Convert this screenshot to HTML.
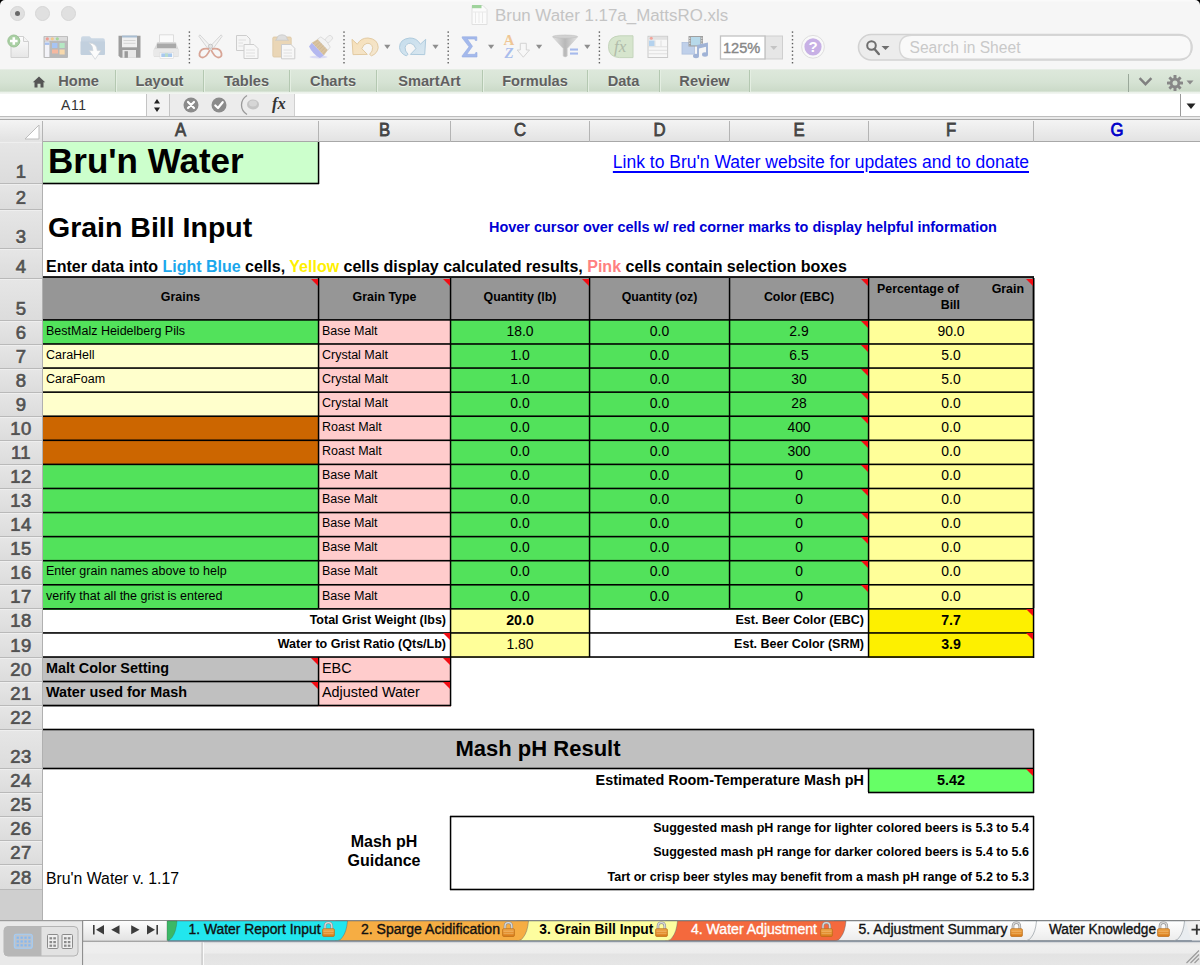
<!DOCTYPE html>
<html><head><meta charset="utf-8"><title>Brun Water</title>
<style>
html,body{margin:0;padding:0;}
body{width:1200px;height:965px;overflow:hidden;position:relative;background:#fff;font-family:"Liberation Sans",sans-serif;}
div{position:absolute;}
.c{white-space:nowrap;overflow:visible;}
.c div{position:absolute;}
.l{}
.t{width:0;height:0;border-left:7px solid transparent;border-top:7px solid #f20d14;}
#titlebar{left:0;top:0;width:1200px;height:69px;background:linear-gradient(#fbfbfb,#f6f6f6 2.5px);border-radius:5px 5px 0 0}
.tl{width:15px;height:15px;border-radius:50%;background:#e0e0e0;border:1px solid #d6d6d6;box-sizing:border-box;top:6px;}
#title{left:495px;top:4.5px;font-size:16.9px;color:#c4c4c4;line-height:22px;white-space:nowrap;}
#ribbon{left:0;top:69px;width:1200px;height:25px;background:linear-gradient(#dde8db,#d6e3d4 50%,#cbdac8 88%,#e9f0e8 92%,#f4f7f3);border-top:1px solid #e6ede5;box-sizing:border-box}
.rt{top:0;height:22px;line-height:23px;font-size:14.6px;font-weight:bold;color:#606060;text-align:center;border-right:1px solid #b4c8b1;box-shadow:1px 0 0 #e4eee2;text-shadow:0 1px 0 rgba(255,255,255,.6)}
#fbar{left:0;top:94px;width:1200px;height:22px;background:#fff;}
#fsep{left:0;top:116px;width:1200px;height:4px;background:#e9e9e9;border-top:1px solid #bdbdbd;border-bottom:1px solid #a9a9a9;box-sizing:border-box}
#colhdr{left:0;top:120px;width:1200px;height:21px;background:linear-gradient(#f4f4f4,#e3e3e3);border-bottom:1px solid #a8a8a8;box-sizing:content-box;height:21px}
.ch{top:120px;height:21px;line-height:21px;text-align:center;font-size:18px;transform:scaleX(.93);color:#4a4a4a;-webkit-text-stroke:0.8px;text-shadow:0 1px 0 #fff}
.chl{top:121px;width:1px;height:21px;background:#b4b4b4}
#rowhdr{left:0;top:141px;width:42px;height:779px;background:#e4e4e4;border-right:1px solid #b4b4b4;box-sizing:content-box;width:42px}
.rh{left:0;width:42px;background:linear-gradient(#e6e6e6,#dcdcdc);box-shadow:inset 0 1px 0 #efefef}
.rh span{position:absolute;left:0;width:42px;text-align:center;bottom:0px;font-size:18.5px;color:#525252;line-height:22px;-webkit-text-stroke:0.7px;text-shadow:0 1px 0 #fff;letter-spacing:0.4px}
.rhl{left:0;width:42px;height:1px;background:#b9b9b9}
#bottom{left:0;top:920px;width:1200px;height:45px;background:#ececec;}
</style></head><body>
<!-- sheet -->
<div id="sheet" style="left:0;top:0;width:1200px;height:920px;overflow:hidden">
<div style="left:42px;top:142px;width:277px;height:42px;background:#ccffcc"></div>
<div class="c" style="left:43px;top:142px;width:275px;height:41px;text-align:left;font-size:35px;color:#000;font-weight:bold;line-height:37px;padding:0 5px;box-sizing:border-box;">Bru'n Water</div>
<div class="c" style="left:590px;top:142px;width:443px;height:41px;text-align:right;font-size:17.5px;color:#0000ff;line-height:41px;padding:0 4px;box-sizing:border-box;"><span style="text-decoration:underline;text-decoration-thickness:1.6px;text-underline-offset:2.5px">Link to Bru'n Water website for updates and to donate</span></div>
<div class="c" style="left:43px;top:210px;width:407px;height:38px;text-align:left;font-size:28.5px;color:#000;font-weight:bold;line-height:34px;padding:0 5px;box-sizing:border-box;">Grain Bill Input</div>
<div class="c" style="left:451px;top:210px;width:582px;height:38px;text-align:left;font-size:14.45px;color:#0000d4;font-weight:bold;line-height:35.0px;padding:0 0px;box-sizing:border-box;padding-left:38px;">Hover cursor over cells w/ red corner marks to display helpful information</div>
<div class="c" style="left:43px;top:249px;width:990px;height:29px;text-align:left;font-size:16px;color:#000;font-weight:bold;line-height:35px;padding:0 3px;box-sizing:border-box;">Enter data into <span style="color:#1ca7ec">Light Blue</span> cells, <span style="color:#fff000">Yellow</span> cells display calculated results, <span style="color:#ff8080">Pink</span> cells contain selection boxes</div>
<div style="left:42px;top:277px;width:277px;height:44px;background:#969696"></div>
<div class="c" style="left:43px;top:279px;width:275px;height:41px;text-align:center;font-size:12.4px;color:#000;font-weight:bold;line-height:37px;padding:0 4px;box-sizing:border-box;">Grains</div>
<div style="left:318px;top:277px;width:133px;height:44px;background:#969696"></div>
<div class="c" style="left:319px;top:279px;width:131px;height:41px;text-align:center;font-size:12.4px;color:#000;font-weight:bold;line-height:37px;padding:0 4px;box-sizing:border-box;">Grain Type</div>
<div style="left:450px;top:277px;width:140px;height:44px;background:#969696"></div>
<div class="c" style="left:451px;top:279px;width:138px;height:41px;text-align:center;font-size:12.4px;color:#000;font-weight:bold;line-height:37px;padding:0 4px;box-sizing:border-box;">Quantity (lb)</div>
<div style="left:589px;top:277px;width:141px;height:44px;background:#969696"></div>
<div class="c" style="left:590px;top:279px;width:139px;height:41px;text-align:center;font-size:12.4px;color:#000;font-weight:bold;line-height:37px;padding:0 4px;box-sizing:border-box;">Quantity (oz)</div>
<div style="left:729px;top:277px;width:140px;height:44px;background:#969696"></div>
<div class="c" style="left:730px;top:279px;width:138px;height:41px;text-align:center;font-size:12.4px;color:#000;font-weight:bold;line-height:37px;padding:0 4px;box-sizing:border-box;">Color (EBC)</div>
<div style="left:868px;top:277px;width:166px;height:44px;background:#969696"></div>
<div class="c" style="left:869px;top:279px;width:164px;height:41px;text-align:left;font-size:12.4px;color:#000;font-weight:bold;padding:0 4px;box-sizing:border-box;"><div style="position:absolute;left:8px;top:2px;line-height:16px;white-space:pre">Percentage of</div><div style="position:absolute;right:9px;top:2px;line-height:16px">Grain</div><div style="position:absolute;right:73px;top:18px;line-height:16px">Bill</div></div>
<div style="left:42px;top:320px;width:277px;height:25px;background:#52e25b"></div>
<div class="c" style="left:43px;top:321px;width:275px;height:23px;text-align:left;font-size:12.5px;color:#000;line-height:21px;padding:0 3px;box-sizing:border-box;">BestMalz Heidelberg Pils</div>
<div style="left:318px;top:320px;width:133px;height:25px;background:#ffcccc"></div>
<div class="c" style="left:319px;top:321px;width:131px;height:23px;text-align:left;font-size:12.5px;color:#000;line-height:21px;padding:0 3px;box-sizing:border-box;">Base Malt</div>
<div style="left:450px;top:320px;width:140px;height:25px;background:#52e25b"></div>
<div class="c" style="left:451px;top:321px;width:138px;height:23px;text-align:center;font-size:13.9px;color:#000;line-height:21px;padding:0 4px;box-sizing:border-box;">18.0</div>
<div style="left:589px;top:320px;width:141px;height:25px;background:#52e25b"></div>
<div class="c" style="left:590px;top:321px;width:139px;height:23px;text-align:center;font-size:13.9px;color:#000;line-height:21px;padding:0 4px;box-sizing:border-box;">0.0</div>
<div style="left:729px;top:320px;width:140px;height:25px;background:#52e25b"></div>
<div class="c" style="left:730px;top:321px;width:138px;height:23px;text-align:center;font-size:13.9px;color:#000;line-height:21px;padding:0 4px;box-sizing:border-box;">2.9</div>
<div style="left:868px;top:320px;width:166px;height:25px;background:#ffff99"></div>
<div class="c" style="left:869px;top:321px;width:164px;height:23px;text-align:center;font-size:13.9px;color:#000;line-height:21px;padding:0 4px;box-sizing:border-box;">90.0</div>
<div style="left:42px;top:344px;width:277px;height:25px;background:#ffffcc"></div>
<div class="c" style="left:43px;top:345px;width:275px;height:23px;text-align:left;font-size:12.5px;color:#000;line-height:21px;padding:0 3px;box-sizing:border-box;">CaraHell</div>
<div style="left:318px;top:344px;width:133px;height:25px;background:#ffcccc"></div>
<div class="c" style="left:319px;top:345px;width:131px;height:23px;text-align:left;font-size:12.5px;color:#000;line-height:21px;padding:0 3px;box-sizing:border-box;">Crystal Malt</div>
<div style="left:450px;top:344px;width:140px;height:25px;background:#52e25b"></div>
<div class="c" style="left:451px;top:345px;width:138px;height:23px;text-align:center;font-size:13.9px;color:#000;line-height:21px;padding:0 4px;box-sizing:border-box;">1.0</div>
<div style="left:589px;top:344px;width:141px;height:25px;background:#52e25b"></div>
<div class="c" style="left:590px;top:345px;width:139px;height:23px;text-align:center;font-size:13.9px;color:#000;line-height:21px;padding:0 4px;box-sizing:border-box;">0.0</div>
<div style="left:729px;top:344px;width:140px;height:25px;background:#52e25b"></div>
<div class="c" style="left:730px;top:345px;width:138px;height:23px;text-align:center;font-size:13.9px;color:#000;line-height:21px;padding:0 4px;box-sizing:border-box;">6.5</div>
<div style="left:868px;top:344px;width:166px;height:25px;background:#ffff99"></div>
<div class="c" style="left:869px;top:345px;width:164px;height:23px;text-align:center;font-size:13.9px;color:#000;line-height:21px;padding:0 4px;box-sizing:border-box;">5.0</div>
<div style="left:42px;top:368px;width:277px;height:25px;background:#ffffcc"></div>
<div class="c" style="left:43px;top:369px;width:275px;height:23px;text-align:left;font-size:12.5px;color:#000;line-height:21px;padding:0 3px;box-sizing:border-box;">CaraFoam</div>
<div style="left:318px;top:368px;width:133px;height:25px;background:#ffcccc"></div>
<div class="c" style="left:319px;top:369px;width:131px;height:23px;text-align:left;font-size:12.5px;color:#000;line-height:21px;padding:0 3px;box-sizing:border-box;">Crystal Malt</div>
<div style="left:450px;top:368px;width:140px;height:25px;background:#52e25b"></div>
<div class="c" style="left:451px;top:369px;width:138px;height:23px;text-align:center;font-size:13.9px;color:#000;line-height:21px;padding:0 4px;box-sizing:border-box;">1.0</div>
<div style="left:589px;top:368px;width:141px;height:25px;background:#52e25b"></div>
<div class="c" style="left:590px;top:369px;width:139px;height:23px;text-align:center;font-size:13.9px;color:#000;line-height:21px;padding:0 4px;box-sizing:border-box;">0.0</div>
<div style="left:729px;top:368px;width:140px;height:25px;background:#52e25b"></div>
<div class="c" style="left:730px;top:369px;width:138px;height:23px;text-align:center;font-size:13.9px;color:#000;line-height:21px;padding:0 4px;box-sizing:border-box;">30</div>
<div style="left:868px;top:368px;width:166px;height:25px;background:#ffff99"></div>
<div class="c" style="left:869px;top:369px;width:164px;height:23px;text-align:center;font-size:13.9px;color:#000;line-height:21px;padding:0 4px;box-sizing:border-box;">5.0</div>
<div style="left:42px;top:392px;width:277px;height:25px;background:#ffffcc"></div>
<div class="c" style="left:43px;top:393px;width:275px;height:23px;text-align:left;font-size:12.5px;color:#000;line-height:21px;padding:0 3px;box-sizing:border-box;"></div>
<div style="left:318px;top:392px;width:133px;height:25px;background:#ffcccc"></div>
<div class="c" style="left:319px;top:393px;width:131px;height:23px;text-align:left;font-size:12.5px;color:#000;line-height:21px;padding:0 3px;box-sizing:border-box;">Crystal Malt</div>
<div style="left:450px;top:392px;width:140px;height:25px;background:#52e25b"></div>
<div class="c" style="left:451px;top:393px;width:138px;height:23px;text-align:center;font-size:13.9px;color:#000;line-height:21px;padding:0 4px;box-sizing:border-box;">0.0</div>
<div style="left:589px;top:392px;width:141px;height:25px;background:#52e25b"></div>
<div class="c" style="left:590px;top:393px;width:139px;height:23px;text-align:center;font-size:13.9px;color:#000;line-height:21px;padding:0 4px;box-sizing:border-box;">0.0</div>
<div style="left:729px;top:392px;width:140px;height:25px;background:#52e25b"></div>
<div class="c" style="left:730px;top:393px;width:138px;height:23px;text-align:center;font-size:13.9px;color:#000;line-height:21px;padding:0 4px;box-sizing:border-box;">28</div>
<div style="left:868px;top:392px;width:166px;height:25px;background:#ffff99"></div>
<div class="c" style="left:869px;top:393px;width:164px;height:23px;text-align:center;font-size:13.9px;color:#000;line-height:21px;padding:0 4px;box-sizing:border-box;">0.0</div>
<div style="left:42px;top:416px;width:277px;height:25px;background:#cc6600"></div>
<div class="c" style="left:43px;top:417px;width:275px;height:23px;text-align:left;font-size:12.5px;color:#000;line-height:21px;padding:0 3px;box-sizing:border-box;"></div>
<div style="left:318px;top:416px;width:133px;height:25px;background:#ffcccc"></div>
<div class="c" style="left:319px;top:417px;width:131px;height:23px;text-align:left;font-size:12.5px;color:#000;line-height:21px;padding:0 3px;box-sizing:border-box;">Roast Malt</div>
<div style="left:450px;top:416px;width:140px;height:25px;background:#52e25b"></div>
<div class="c" style="left:451px;top:417px;width:138px;height:23px;text-align:center;font-size:13.9px;color:#000;line-height:21px;padding:0 4px;box-sizing:border-box;">0.0</div>
<div style="left:589px;top:416px;width:141px;height:25px;background:#52e25b"></div>
<div class="c" style="left:590px;top:417px;width:139px;height:23px;text-align:center;font-size:13.9px;color:#000;line-height:21px;padding:0 4px;box-sizing:border-box;">0.0</div>
<div style="left:729px;top:416px;width:140px;height:25px;background:#52e25b"></div>
<div class="c" style="left:730px;top:417px;width:138px;height:23px;text-align:center;font-size:13.9px;color:#000;line-height:21px;padding:0 4px;box-sizing:border-box;">400</div>
<div style="left:868px;top:416px;width:166px;height:25px;background:#ffff99"></div>
<div class="c" style="left:869px;top:417px;width:164px;height:23px;text-align:center;font-size:13.9px;color:#000;line-height:21px;padding:0 4px;box-sizing:border-box;">0.0</div>
<div style="left:42px;top:440px;width:277px;height:25px;background:#cc6600"></div>
<div class="c" style="left:43px;top:441px;width:275px;height:23px;text-align:left;font-size:12.5px;color:#000;line-height:21px;padding:0 3px;box-sizing:border-box;"></div>
<div style="left:318px;top:440px;width:133px;height:25px;background:#ffcccc"></div>
<div class="c" style="left:319px;top:441px;width:131px;height:23px;text-align:left;font-size:12.5px;color:#000;line-height:21px;padding:0 3px;box-sizing:border-box;">Roast Malt</div>
<div style="left:450px;top:440px;width:140px;height:25px;background:#52e25b"></div>
<div class="c" style="left:451px;top:441px;width:138px;height:23px;text-align:center;font-size:13.9px;color:#000;line-height:21px;padding:0 4px;box-sizing:border-box;">0.0</div>
<div style="left:589px;top:440px;width:141px;height:25px;background:#52e25b"></div>
<div class="c" style="left:590px;top:441px;width:139px;height:23px;text-align:center;font-size:13.9px;color:#000;line-height:21px;padding:0 4px;box-sizing:border-box;">0.0</div>
<div style="left:729px;top:440px;width:140px;height:25px;background:#52e25b"></div>
<div class="c" style="left:730px;top:441px;width:138px;height:23px;text-align:center;font-size:13.9px;color:#000;line-height:21px;padding:0 4px;box-sizing:border-box;">300</div>
<div style="left:868px;top:440px;width:166px;height:25px;background:#ffff99"></div>
<div class="c" style="left:869px;top:441px;width:164px;height:23px;text-align:center;font-size:13.9px;color:#000;line-height:21px;padding:0 4px;box-sizing:border-box;">0.0</div>
<div style="left:42px;top:464px;width:277px;height:25px;background:#52e25b"></div>
<div class="c" style="left:43px;top:465px;width:275px;height:23px;text-align:left;font-size:12.5px;color:#000;line-height:21px;padding:0 3px;box-sizing:border-box;"></div>
<div style="left:318px;top:464px;width:133px;height:25px;background:#ffcccc"></div>
<div class="c" style="left:319px;top:465px;width:131px;height:23px;text-align:left;font-size:12.5px;color:#000;line-height:21px;padding:0 3px;box-sizing:border-box;">Base Malt</div>
<div style="left:450px;top:464px;width:140px;height:25px;background:#52e25b"></div>
<div class="c" style="left:451px;top:465px;width:138px;height:23px;text-align:center;font-size:13.9px;color:#000;line-height:21px;padding:0 4px;box-sizing:border-box;">0.0</div>
<div style="left:589px;top:464px;width:141px;height:25px;background:#52e25b"></div>
<div class="c" style="left:590px;top:465px;width:139px;height:23px;text-align:center;font-size:13.9px;color:#000;line-height:21px;padding:0 4px;box-sizing:border-box;">0.0</div>
<div style="left:729px;top:464px;width:140px;height:25px;background:#52e25b"></div>
<div class="c" style="left:730px;top:465px;width:138px;height:23px;text-align:center;font-size:13.9px;color:#000;line-height:21px;padding:0 4px;box-sizing:border-box;">0</div>
<div style="left:868px;top:464px;width:166px;height:25px;background:#ffff99"></div>
<div class="c" style="left:869px;top:465px;width:164px;height:23px;text-align:center;font-size:13.9px;color:#000;line-height:21px;padding:0 4px;box-sizing:border-box;">0.0</div>
<div style="left:42px;top:488px;width:277px;height:26px;background:#52e25b"></div>
<div class="c" style="left:43px;top:489px;width:275px;height:23px;text-align:left;font-size:12.5px;color:#000;line-height:21px;padding:0 3px;box-sizing:border-box;"></div>
<div style="left:318px;top:488px;width:133px;height:26px;background:#ffcccc"></div>
<div class="c" style="left:319px;top:489px;width:131px;height:23px;text-align:left;font-size:12.5px;color:#000;line-height:21px;padding:0 3px;box-sizing:border-box;">Base Malt</div>
<div style="left:450px;top:488px;width:140px;height:26px;background:#52e25b"></div>
<div class="c" style="left:451px;top:489px;width:138px;height:23px;text-align:center;font-size:13.9px;color:#000;line-height:21px;padding:0 4px;box-sizing:border-box;">0.0</div>
<div style="left:589px;top:488px;width:141px;height:26px;background:#52e25b"></div>
<div class="c" style="left:590px;top:489px;width:139px;height:23px;text-align:center;font-size:13.9px;color:#000;line-height:21px;padding:0 4px;box-sizing:border-box;">0.0</div>
<div style="left:729px;top:488px;width:140px;height:26px;background:#52e25b"></div>
<div class="c" style="left:730px;top:489px;width:138px;height:23px;text-align:center;font-size:13.9px;color:#000;line-height:21px;padding:0 4px;box-sizing:border-box;">0</div>
<div style="left:868px;top:488px;width:166px;height:26px;background:#ffff99"></div>
<div class="c" style="left:869px;top:489px;width:164px;height:23px;text-align:center;font-size:13.9px;color:#000;line-height:21px;padding:0 4px;box-sizing:border-box;">0.0</div>
<div style="left:42px;top:513px;width:277px;height:25px;background:#52e25b"></div>
<div class="c" style="left:43px;top:513px;width:275px;height:23px;text-align:left;font-size:12.5px;color:#000;line-height:21px;padding:0 3px;box-sizing:border-box;"></div>
<div style="left:318px;top:513px;width:133px;height:25px;background:#ffcccc"></div>
<div class="c" style="left:319px;top:513px;width:131px;height:23px;text-align:left;font-size:12.5px;color:#000;line-height:21px;padding:0 3px;box-sizing:border-box;">Base Malt</div>
<div style="left:450px;top:513px;width:140px;height:25px;background:#52e25b"></div>
<div class="c" style="left:451px;top:513px;width:138px;height:23px;text-align:center;font-size:13.9px;color:#000;line-height:21px;padding:0 4px;box-sizing:border-box;">0.0</div>
<div style="left:589px;top:513px;width:141px;height:25px;background:#52e25b"></div>
<div class="c" style="left:590px;top:513px;width:139px;height:23px;text-align:center;font-size:13.9px;color:#000;line-height:21px;padding:0 4px;box-sizing:border-box;">0.0</div>
<div style="left:729px;top:513px;width:140px;height:25px;background:#52e25b"></div>
<div class="c" style="left:730px;top:513px;width:138px;height:23px;text-align:center;font-size:13.9px;color:#000;line-height:21px;padding:0 4px;box-sizing:border-box;">0</div>
<div style="left:868px;top:513px;width:166px;height:25px;background:#ffff99"></div>
<div class="c" style="left:869px;top:513px;width:164px;height:23px;text-align:center;font-size:13.9px;color:#000;line-height:21px;padding:0 4px;box-sizing:border-box;">0.0</div>
<div style="left:42px;top:537px;width:277px;height:25px;background:#52e25b"></div>
<div class="c" style="left:43px;top:537px;width:275px;height:23px;text-align:left;font-size:12.5px;color:#000;line-height:21px;padding:0 3px;box-sizing:border-box;"></div>
<div style="left:318px;top:537px;width:133px;height:25px;background:#ffcccc"></div>
<div class="c" style="left:319px;top:537px;width:131px;height:23px;text-align:left;font-size:12.5px;color:#000;line-height:21px;padding:0 3px;box-sizing:border-box;">Base Malt</div>
<div style="left:450px;top:537px;width:140px;height:25px;background:#52e25b"></div>
<div class="c" style="left:451px;top:537px;width:138px;height:23px;text-align:center;font-size:13.9px;color:#000;line-height:21px;padding:0 4px;box-sizing:border-box;">0.0</div>
<div style="left:589px;top:537px;width:141px;height:25px;background:#52e25b"></div>
<div class="c" style="left:590px;top:537px;width:139px;height:23px;text-align:center;font-size:13.9px;color:#000;line-height:21px;padding:0 4px;box-sizing:border-box;">0.0</div>
<div style="left:729px;top:537px;width:140px;height:25px;background:#52e25b"></div>
<div class="c" style="left:730px;top:537px;width:138px;height:23px;text-align:center;font-size:13.9px;color:#000;line-height:21px;padding:0 4px;box-sizing:border-box;">0</div>
<div style="left:868px;top:537px;width:166px;height:25px;background:#ffff99"></div>
<div class="c" style="left:869px;top:537px;width:164px;height:23px;text-align:center;font-size:13.9px;color:#000;line-height:21px;padding:0 4px;box-sizing:border-box;">0.0</div>
<div style="left:42px;top:561px;width:277px;height:25px;background:#52e25b"></div>
<div class="c" style="left:43px;top:561px;width:275px;height:23px;text-align:left;font-size:12.5px;color:#000;line-height:21px;padding:0 3px;box-sizing:border-box;">Enter grain names above to help</div>
<div style="left:318px;top:561px;width:133px;height:25px;background:#ffcccc"></div>
<div class="c" style="left:319px;top:561px;width:131px;height:23px;text-align:left;font-size:12.5px;color:#000;line-height:21px;padding:0 3px;box-sizing:border-box;">Base Malt</div>
<div style="left:450px;top:561px;width:140px;height:25px;background:#52e25b"></div>
<div class="c" style="left:451px;top:561px;width:138px;height:23px;text-align:center;font-size:13.9px;color:#000;line-height:21px;padding:0 4px;box-sizing:border-box;">0.0</div>
<div style="left:589px;top:561px;width:141px;height:25px;background:#52e25b"></div>
<div class="c" style="left:590px;top:561px;width:139px;height:23px;text-align:center;font-size:13.9px;color:#000;line-height:21px;padding:0 4px;box-sizing:border-box;">0.0</div>
<div style="left:729px;top:561px;width:140px;height:25px;background:#52e25b"></div>
<div class="c" style="left:730px;top:561px;width:138px;height:23px;text-align:center;font-size:13.9px;color:#000;line-height:21px;padding:0 4px;box-sizing:border-box;">0</div>
<div style="left:868px;top:561px;width:166px;height:25px;background:#ffff99"></div>
<div class="c" style="left:869px;top:561px;width:164px;height:23px;text-align:center;font-size:13.9px;color:#000;line-height:21px;padding:0 4px;box-sizing:border-box;">0.0</div>
<div style="left:42px;top:585px;width:277px;height:25px;background:#52e25b"></div>
<div class="c" style="left:43px;top:585px;width:275px;height:23px;text-align:left;font-size:12.5px;color:#000;line-height:22.0px;padding:0 3px;box-sizing:border-box;">verify that all the grist is entered</div>
<div style="left:318px;top:585px;width:133px;height:25px;background:#ffcccc"></div>
<div class="c" style="left:319px;top:585px;width:131px;height:23px;text-align:left;font-size:12.5px;color:#000;line-height:22.0px;padding:0 3px;box-sizing:border-box;">Base Malt</div>
<div style="left:450px;top:585px;width:140px;height:25px;background:#52e25b"></div>
<div class="c" style="left:451px;top:585px;width:138px;height:23px;text-align:center;font-size:13.9px;color:#000;line-height:22.0px;padding:0 4px;box-sizing:border-box;">0.0</div>
<div style="left:589px;top:585px;width:141px;height:25px;background:#52e25b"></div>
<div class="c" style="left:590px;top:585px;width:139px;height:23px;text-align:center;font-size:13.9px;color:#000;line-height:22.0px;padding:0 4px;box-sizing:border-box;">0.0</div>
<div style="left:729px;top:585px;width:140px;height:25px;background:#52e25b"></div>
<div class="c" style="left:730px;top:585px;width:138px;height:23px;text-align:center;font-size:13.9px;color:#000;line-height:22.0px;padding:0 4px;box-sizing:border-box;">0</div>
<div style="left:868px;top:585px;width:166px;height:25px;background:#ffff99"></div>
<div class="c" style="left:869px;top:585px;width:164px;height:23px;text-align:center;font-size:13.9px;color:#000;line-height:22.0px;padding:0 4px;box-sizing:border-box;">0.0</div>
<div class="c" style="left:43px;top:609px;width:407px;height:23px;text-align:right;font-size:12.5px;color:#000;font-weight:bold;line-height:22.0px;padding:0 4px;box-sizing:border-box;">Total Grist Weight (lbs)</div>
<div class="c" style="left:43px;top:633px;width:407px;height:24px;text-align:right;font-size:12.5px;color:#000;font-weight:bold;line-height:23.0px;padding:0 4px;box-sizing:border-box;">Water to Grist Ratio (Qts/Lb)</div>
<div style="left:450px;top:609px;width:140px;height:25px;background:#ffff99"></div>
<div class="c" style="left:451px;top:609px;width:138px;height:23px;text-align:center;font-size:14.2px;color:#000;font-weight:bold;line-height:22.0px;padding:0 4px;box-sizing:border-box;">20.0</div>
<div style="left:450px;top:633px;width:140px;height:25px;background:#ffff99"></div>
<div class="c" style="left:451px;top:633px;width:138px;height:24px;text-align:center;font-size:13.9px;color:#000;line-height:23.0px;padding:0 4px;box-sizing:border-box;">1.80</div>
<div class="c" style="left:590px;top:609px;width:278px;height:23px;text-align:right;font-size:12.5px;color:#000;font-weight:bold;line-height:22.0px;padding:0 4px;box-sizing:border-box;">Est. Beer Color (EBC)</div>
<div class="c" style="left:590px;top:633px;width:278px;height:24px;text-align:right;font-size:12.5px;color:#000;font-weight:bold;line-height:23.0px;padding:0 4px;box-sizing:border-box;">Est. Beer Color (SRM)</div>
<div style="left:868px;top:609px;width:166px;height:25px;background:#fdf000"></div>
<div class="c" style="left:869px;top:609px;width:164px;height:23px;text-align:center;font-size:14.2px;color:#000;font-weight:bold;line-height:22.0px;padding:0 4px;box-sizing:border-box;">7.7</div>
<div style="left:868px;top:633px;width:166px;height:25px;background:#fdf000"></div>
<div class="c" style="left:869px;top:633px;width:164px;height:24px;text-align:center;font-size:14.2px;color:#000;font-weight:bold;line-height:23.0px;padding:0 4px;box-sizing:border-box;">3.9</div>
<div style="left:42px;top:657px;width:277px;height:26px;background:#c0c0c0"></div>
<div class="c" style="left:43px;top:658px;width:275px;height:23px;text-align:left;font-size:14.4px;color:#000;font-weight:bold;line-height:21px;padding:0 3px;box-sizing:border-box;">Malt Color Setting</div>
<div style="left:42px;top:682px;width:277px;height:25px;background:#c0c0c0"></div>
<div class="c" style="left:43px;top:682px;width:275px;height:23px;text-align:left;font-size:14.4px;color:#000;font-weight:bold;line-height:21px;padding:0 3px;box-sizing:border-box;">Water used for Mash</div>
<div style="left:318px;top:657px;width:133px;height:26px;background:#ffcccc"></div>
<div class="c" style="left:319px;top:658px;width:131px;height:23px;text-align:left;font-size:14.4px;color:#000;line-height:21px;padding:0 3px;box-sizing:border-box;">EBC</div>
<div style="left:318px;top:682px;width:133px;height:25px;background:#ffcccc"></div>
<div class="c" style="left:319px;top:682px;width:131px;height:23px;text-align:left;font-size:14.4px;color:#000;line-height:21px;padding:0 3px;box-sizing:border-box;">Adjusted Water</div>
<div style="left:42px;top:730px;width:992px;height:39px;background:#c0c0c0"></div>
<div class="c" style="left:43px;top:730px;width:990px;height:38px;text-align:center;font-size:22px;color:#000;font-weight:bold;line-height:38px;padding:0 4px;box-sizing:border-box;">Mash pH Result</div>
<div class="c" style="left:43px;top:769px;width:825px;height:23px;text-align:right;font-size:14.4px;color:#000;font-weight:bold;line-height:23px;padding:0 4px;box-sizing:border-box;">Estimated Room-Temperature Mash pH</div>
<div style="left:868px;top:768px;width:166px;height:25px;background:#66ff66"></div>
<div class="c" style="left:869px;top:769px;width:164px;height:23px;text-align:center;font-size:14.4px;color:#000;font-weight:bold;line-height:23px;padding:0 4px;box-sizing:border-box;">5.42</div>
<div class="c" style="left:319px;top:817px;width:131px;height:72px;text-align:center;font-size:16px;color:#000;font-weight:bold;padding:0 4px;box-sizing:border-box;line-height:19px;padding-top:15px;padding-right:5px;">Mash pH<br>Guidance</div>
<div class="c" style="left:451px;top:817px;width:582px;height:23px;text-align:right;font-size:12.5px;color:#000;font-weight:bold;line-height:23px;padding:0 4px;box-sizing:border-box;">Suggested mash pH range for lighter colored beers is 5.3 to 5.4</div>
<div class="c" style="left:451px;top:841px;width:582px;height:23px;text-align:right;font-size:12.5px;color:#000;font-weight:bold;line-height:23px;padding:0 4px;box-sizing:border-box;">Suggested mash pH range for darker colored beers is 5.4 to 5.6</div>
<div class="c" style="left:451px;top:865px;width:582px;height:24px;text-align:right;font-size:12.5px;color:#000;font-weight:bold;line-height:24px;padding:0 4px;box-sizing:border-box;">Tart or crisp beer styles may benefit from a mash pH range of 5.2 to 5.3</div>
<div class="c" style="left:43px;top:865px;width:275px;height:24px;text-align:left;font-size:15.8px;color:#000;line-height:28px;padding:0 3px;box-sizing:border-box;">Bru'n Water v. 1.17</div>
<div class="l" style="left:42px;top:182px;width:277px;height:3px;background:linear-gradient(to bottom,rgba(0,0,0,0.30) 0px 1px,rgba(0,0,0,1.00) 1px 2px,rgba(0,0,0,0.30) 2px 3px)"></div>
<div class="l" style="left:317px;top:141px;width:3px;height:43px;background:linear-gradient(to right,rgba(0,0,0,0.20) 0px 1px,rgba(0,0,0,1.00) 1px 2px,rgba(0,0,0,0.30) 2px 3px)"></div>
<div class="l" style="left:42px;top:276px;width:992px;height:2px;background:linear-gradient(to bottom,rgba(0,0,0,0.85) 0px 1px,rgba(0,0,0,0.85) 1px 2px)"></div>
<div class="l" style="left:42px;top:319px;width:992px;height:2px;background:linear-gradient(to bottom,rgba(0,0,0,0.90) 0px 1px,rgba(0,0,0,0.70) 1px 2px)"></div>
<div class="l" style="left:42px;top:343px;width:992px;height:2px;background:linear-gradient(to bottom,rgba(0,0,0,0.82) 0px 1px,rgba(0,0,0,0.78) 1px 2px)"></div>
<div class="l" style="left:42px;top:367px;width:992px;height:2px;background:linear-gradient(to bottom,rgba(0,0,0,0.74) 0px 1px,rgba(0,0,0,0.86) 1px 2px)"></div>
<div class="l" style="left:42px;top:391px;width:992px;height:2px;background:linear-gradient(to bottom,rgba(0,0,0,0.66) 0px 1px,rgba(0,0,0,0.94) 1px 2px)"></div>
<div class="l" style="left:42px;top:415px;width:992px;height:3px;background:linear-gradient(to bottom,rgba(0,0,0,0.58) 0px 1px,rgba(0,0,0,1.00) 1px 2px,rgba(0,0,0,0.02) 2px 3px)"></div>
<div class="l" style="left:42px;top:439px;width:992px;height:3px;background:linear-gradient(to bottom,rgba(0,0,0,0.50) 0px 1px,rgba(0,0,0,1.00) 1px 2px,rgba(0,0,0,0.10) 2px 3px)"></div>
<div class="l" style="left:42px;top:463px;width:992px;height:3px;background:linear-gradient(to bottom,rgba(0,0,0,0.42) 0px 1px,rgba(0,0,0,1.00) 1px 2px,rgba(0,0,0,0.18) 2px 3px)"></div>
<div class="l" style="left:42px;top:487px;width:992px;height:3px;background:linear-gradient(to bottom,rgba(0,0,0,0.34) 0px 1px,rgba(0,0,0,1.00) 1px 2px,rgba(0,0,0,0.26) 2px 3px)"></div>
<div class="l" style="left:42px;top:511px;width:992px;height:3px;background:linear-gradient(to bottom,rgba(0,0,0,0.26) 0px 1px,rgba(0,0,0,1.00) 1px 2px,rgba(0,0,0,0.34) 2px 3px)"></div>
<div class="l" style="left:42px;top:535px;width:992px;height:3px;background:linear-gradient(to bottom,rgba(0,0,0,0.18) 0px 1px,rgba(0,0,0,1.00) 1px 2px,rgba(0,0,0,0.42) 2px 3px)"></div>
<div class="l" style="left:42px;top:559px;width:992px;height:3px;background:linear-gradient(to bottom,rgba(0,0,0,0.10) 0px 1px,rgba(0,0,0,1.00) 1px 2px,rgba(0,0,0,0.50) 2px 3px)"></div>
<div class="l" style="left:42px;top:583px;width:992px;height:3px;background:linear-gradient(to bottom,rgba(0,0,0,0.02) 0px 1px,rgba(0,0,0,1.00) 1px 2px,rgba(0,0,0,0.58) 2px 3px)"></div>
<div class="l" style="left:42px;top:608px;width:992px;height:2px;background:linear-gradient(to bottom,rgba(0,0,0,0.94) 0px 1px,rgba(0,0,0,0.66) 1px 2px)"></div>
<div class="l" style="left:42px;top:632px;width:992px;height:2px;background:linear-gradient(to bottom,rgba(0,0,0,0.86) 0px 1px,rgba(0,0,0,0.74) 1px 2px)"></div>
<div class="l" style="left:42px;top:656px;width:992px;height:2px;background:linear-gradient(to bottom,rgba(0,0,0,0.78) 0px 1px,rgba(0,0,0,0.82) 1px 2px)"></div>
<div class="l" style="left:317px;top:278px;width:3px;height:330px;background:linear-gradient(to right,rgba(0,0,0,0.20) 0px 1px,rgba(0,0,0,1.00) 1px 2px,rgba(0,0,0,0.30) 2px 3px)"></div>
<div class="l" style="left:449px;top:278px;width:3px;height:330px;background:linear-gradient(to right,rgba(0,0,0,0.20) 0px 1px,rgba(0,0,0,1.00) 1px 2px,rgba(0,0,0,0.30) 2px 3px)"></div>
<div class="l" style="left:588px;top:278px;width:3px;height:330px;background:linear-gradient(to right,rgba(0,0,0,0.20) 0px 1px,rgba(0,0,0,1.00) 1px 2px,rgba(0,0,0,0.30) 2px 3px)"></div>
<div class="l" style="left:728px;top:278px;width:3px;height:330px;background:linear-gradient(to right,rgba(0,0,0,0.20) 0px 1px,rgba(0,0,0,1.00) 1px 2px,rgba(0,0,0,0.30) 2px 3px)"></div>
<div class="l" style="left:867px;top:278px;width:3px;height:330px;background:linear-gradient(to right,rgba(0,0,0,0.20) 0px 1px,rgba(0,0,0,1.00) 1px 2px,rgba(0,0,0,0.30) 2px 3px)"></div>
<div class="l" style="left:1032px;top:278px;width:3px;height:330px;background:linear-gradient(to right,rgba(0,0,0,0.20) 0px 1px,rgba(0,0,0,1.00) 1px 2px,rgba(0,0,0,0.30) 2px 3px)"></div>
<div class="l" style="left:1032px;top:278px;width:3px;height:380px;background:linear-gradient(to right,rgba(0,0,0,0.20) 0px 1px,rgba(0,0,0,1.00) 1px 2px,rgba(0,0,0,0.30) 2px 3px)"></div>
<div class="l" style="left:449px;top:608px;width:3px;height:49px;background:linear-gradient(to right,rgba(0,0,0,0.20) 0px 1px,rgba(0,0,0,1.00) 1px 2px,rgba(0,0,0,0.30) 2px 3px)"></div>
<div class="l" style="left:588px;top:608px;width:3px;height:49px;background:linear-gradient(to right,rgba(0,0,0,0.20) 0px 1px,rgba(0,0,0,1.00) 1px 2px,rgba(0,0,0,0.30) 2px 3px)"></div>
<div class="l" style="left:867px;top:608px;width:3px;height:49px;background:linear-gradient(to right,rgba(0,0,0,0.20) 0px 1px,rgba(0,0,0,1.00) 1px 2px,rgba(0,0,0,0.30) 2px 3px)"></div>
<div class="l" style="left:42px;top:680px;width:409px;height:3px;background:linear-gradient(to bottom,rgba(0,0,0,0.30) 0px 1px,rgba(0,0,0,1.00) 1px 2px,rgba(0,0,0,0.30) 2px 3px)"></div>
<div class="l" style="left:42px;top:704px;width:409px;height:3px;background:linear-gradient(to bottom,rgba(0,0,0,0.30) 0px 1px,rgba(0,0,0,1.00) 1px 2px,rgba(0,0,0,0.30) 2px 3px)"></div>
<div class="l" style="left:317px;top:657px;width:3px;height:48px;background:linear-gradient(to right,rgba(0,0,0,0.20) 0px 1px,rgba(0,0,0,1.00) 1px 2px,rgba(0,0,0,0.30) 2px 3px)"></div>
<div class="l" style="left:449px;top:657px;width:3px;height:49px;background:linear-gradient(to right,rgba(0,0,0,0.20) 0px 1px,rgba(0,0,0,1.00) 1px 2px,rgba(0,0,0,0.30) 2px 3px)"></div>
<div class="l" style="left:42px;top:728px;width:992px;height:3px;background:linear-gradient(to bottom,rgba(0,0,0,0.30) 0px 1px,rgba(0,0,0,1.00) 1px 2px,rgba(0,0,0,0.30) 2px 3px)"></div>
<div class="l" style="left:42px;top:767px;width:992px;height:3px;background:linear-gradient(to bottom,rgba(0,0,0,0.30) 0px 1px,rgba(0,0,0,1.00) 1px 2px,rgba(0,0,0,0.30) 2px 3px)"></div>
<div class="l" style="left:1032px;top:729px;width:3px;height:64px;background:linear-gradient(to right,rgba(0,0,0,0.20) 0px 1px,rgba(0,0,0,1.00) 1px 2px,rgba(0,0,0,0.30) 2px 3px)"></div>
<div class="l" style="left:868px;top:791px;width:166px;height:3px;background:linear-gradient(to bottom,rgba(0,0,0,0.30) 0px 1px,rgba(0,0,0,1.00) 1px 2px,rgba(0,0,0,0.30) 2px 3px)"></div>
<div class="l" style="left:867px;top:768px;width:3px;height:24px;background:linear-gradient(to right,rgba(0,0,0,0.20) 0px 1px,rgba(0,0,0,1.00) 1px 2px,rgba(0,0,0,0.30) 2px 3px)"></div>
<div class="l" style="left:450px;top:815px;width:584px;height:3px;background:linear-gradient(to bottom,rgba(0,0,0,0.30) 0px 1px,rgba(0,0,0,1.00) 1px 2px,rgba(0,0,0,0.30) 2px 3px)"></div>
<div class="l" style="left:450px;top:888px;width:584px;height:3px;background:linear-gradient(to bottom,rgba(0,0,0,0.30) 0px 1px,rgba(0,0,0,1.00) 1px 2px,rgba(0,0,0,0.30) 2px 3px)"></div>
<div class="l" style="left:449px;top:816px;width:3px;height:74px;background:linear-gradient(to right,rgba(0,0,0,0.20) 0px 1px,rgba(0,0,0,1.00) 1px 2px,rgba(0,0,0,0.30) 2px 3px)"></div>
<div class="l" style="left:1032px;top:816px;width:3px;height:74px;background:linear-gradient(to right,rgba(0,0,0,0.20) 0px 1px,rgba(0,0,0,1.00) 1px 2px,rgba(0,0,0,0.30) 2px 3px)"></div>
<div class="t" style="left:311px;top:279px"></div>
<div class="t" style="left:443px;top:279px"></div>
<div class="t" style="left:582px;top:279px"></div>
<div class="t" style="left:1026px;top:279px"></div>
<div class="t" style="left:861px;top:279px"></div>
<div class="t" style="left:861px;top:321px"></div>
<div class="t" style="left:861px;top:345px"></div>
<div class="t" style="left:861px;top:369px"></div>
<div class="t" style="left:861px;top:393px"></div>
<div class="t" style="left:861px;top:417px"></div>
<div class="t" style="left:861px;top:441px"></div>
<div class="t" style="left:861px;top:465px"></div>
<div class="t" style="left:861px;top:489px"></div>
<div class="t" style="left:861px;top:513px"></div>
<div class="t" style="left:861px;top:537px"></div>
<div class="t" style="left:861px;top:561px"></div>
<div class="t" style="left:861px;top:585px"></div>
<div class="t" style="left:1026px;top:609px"></div>
<div class="t" style="left:1026px;top:633px"></div>
<div class="t" style="left:443px;top:633px"></div>
<div class="t" style="left:311px;top:658px"></div>
<div class="t" style="left:443px;top:658px"></div>
<div class="t" style="left:311px;top:682px"></div>
<div class="t" style="left:443px;top:682px"></div>
<div class="t" style="left:1026px;top:769px"></div>
</div>
<div id="colhdr"></div>
<div id="rowhdr"></div>
<div class="ch" style="left:43px;width:275px;color:#444">A</div>
<div class="chl" style="left:318px"></div>
<div class="ch" style="left:319px;width:131px;color:#444">B</div>
<div class="chl" style="left:450px"></div>
<div class="ch" style="left:451px;width:138px;color:#444">C</div>
<div class="chl" style="left:589px"></div>
<div class="ch" style="left:590px;width:139px;color:#444">D</div>
<div class="chl" style="left:729px"></div>
<div class="ch" style="left:730px;width:138px;color:#444">E</div>
<div class="chl" style="left:868px"></div>
<div class="ch" style="left:869px;width:164px;color:#444">F</div>
<div class="chl" style="left:1033px"></div>
<div class="ch" style="left:1034px;width:166px;color:#0000c8">G</div>
<div class="rh" style="top:142px;height:41px"><span>1</span></div>
<div class="rhl" style="top:183px"></div>
<div class="rh" style="top:184px;height:25px"><span>2</span></div>
<div class="rhl" style="top:209px"></div>
<div class="rh" style="top:210px;height:38px"><span>3</span></div>
<div class="rhl" style="top:248px"></div>
<div class="rh" style="top:249px;height:29px"><span>4</span></div>
<div class="rhl" style="top:278px"></div>
<div class="rh" style="top:279px;height:41px"><span>5</span></div>
<div class="rhl" style="top:320px"></div>
<div class="rh" style="top:321px;height:23px"><span>6</span></div>
<div class="rhl" style="top:344px"></div>
<div class="rh" style="top:345px;height:23px"><span>7</span></div>
<div class="rhl" style="top:368px"></div>
<div class="rh" style="top:369px;height:23px"><span>8</span></div>
<div class="rhl" style="top:392px"></div>
<div class="rh" style="top:393px;height:23px"><span>9</span></div>
<div class="rhl" style="top:416px"></div>
<div class="rh" style="top:417px;height:23px"><span>10</span></div>
<div class="rhl" style="top:440px"></div>
<div class="rh" style="top:441px;height:23px"><span>11</span></div>
<div class="rhl" style="top:464px"></div>
<div class="rh" style="top:465px;height:23px"><span>12</span></div>
<div class="rhl" style="top:488px"></div>
<div class="rh" style="top:489px;height:23px"><span>13</span></div>
<div class="rhl" style="top:512px"></div>
<div class="rh" style="top:513px;height:23px"><span>14</span></div>
<div class="rhl" style="top:536px"></div>
<div class="rh" style="top:537px;height:23px"><span>15</span></div>
<div class="rhl" style="top:560px"></div>
<div class="rh" style="top:561px;height:23px"><span>16</span></div>
<div class="rhl" style="top:584px"></div>
<div class="rh" style="top:585px;height:23px"><span>17</span></div>
<div class="rhl" style="top:608px"></div>
<div class="rh" style="top:609px;height:23px"><span>18</span></div>
<div class="rhl" style="top:632px"></div>
<div class="rh" style="top:633px;height:24px"><span>19</span></div>
<div class="rhl" style="top:657px"></div>
<div class="rh" style="top:658px;height:23px"><span>20</span></div>
<div class="rhl" style="top:681px"></div>
<div class="rh" style="top:682px;height:23px"><span>21</span></div>
<div class="rhl" style="top:705px"></div>
<div class="rh" style="top:706px;height:23px"><span>22</span></div>
<div class="rhl" style="top:729px"></div>
<div class="rh" style="top:730px;height:38px"><span>23</span></div>
<div class="rhl" style="top:768px"></div>
<div class="rh" style="top:769px;height:23px"><span>24</span></div>
<div class="rhl" style="top:792px"></div>
<div class="rh" style="top:793px;height:23px"><span>25</span></div>
<div class="rhl" style="top:816px"></div>
<div class="rh" style="top:817px;height:23px"><span>26</span></div>
<div class="rhl" style="top:840px"></div>
<div class="rh" style="top:841px;height:23px"><span>27</span></div>
<div class="rhl" style="top:864px"></div>
<div class="rh" style="top:865px;height:24px"><span>28</span></div>
<div class="rhl" style="top:889px"></div>
<div style="left:0;top:890px;width:42px;height:30px;background:#cfcfcf"></div>
<div style="left:42px;top:141px;width:1px;height:779px;background:#b0b0b0"></div>
<!-- select-all corner -->
<div style="left:0;top:120px;width:42px;height:20px;background:linear-gradient(#f4f4f4,#e3e3e3)"></div>
<svg style="position:absolute;left:24px;top:124px" width="16" height="16"><path d="M15 1 L15 15 L1 15 Z" fill="#fff" stroke="#bdbdbd" stroke-width="1"/></svg>
<div class="chl" style="left:42px"></div>

<!-- title bar -->
<div style="left:0;top:0;width:6px;height:6px;background:#000"></div><div style="left:1194px;top:0;width:6px;height:6px;background:#000"></div>
<div id="titlebar">
  <div class="tl" style="left:10px;"></div><div style="left:15px;top:11.2px;width:5px;height:5px;border-radius:50%;background:#686868"></div>
  <div class="tl" style="left:35px"></div>
  <div class="tl" style="left:61px"></div>
  <div id="title">Brun Water 1.17a_MattsRO.xls</div>
  <svg style="position:absolute;left:0;top:24px" width="1200" height="44" viewBox="0 24 1200 44">
<defs>
<linearGradient id="gpg" x1="0" y1="0" x2="0" y2="1"><stop offset="0" stop-color="#fdfdfd"/><stop offset="1" stop-color="#e6e6e6"/></linearGradient>
<linearGradient id="gfd" x1="0" y1="0" x2="0" y2="1"><stop offset="0" stop-color="#cdd9e5"/><stop offset="1" stop-color="#bccbdb"/></linearGradient>
<linearGradient id="gun" x1="0" y1="0" x2="1" y2="1"><stop offset="0" stop-color="#f7dfb6"/><stop offset="1" stop-color="#f3e7d2"/></linearGradient>
<linearGradient id="gre" x1="0" y1="0" x2="1" y2="1"><stop offset="0" stop-color="#c4dcec"/><stop offset="1" stop-color="#dbe8f0"/></linearGradient>
<linearGradient id="gfu" x1="0" y1="0" x2="1" y2="0"><stop offset="0" stop-color="#e4e4e4"/><stop offset=".5" stop-color="#b8b8b8"/><stop offset="1" stop-color="#e4e4e4"/></linearGradient>
</defs>
<!-- 1 new doc -->
<path d="M11 36.5 H23.5 L28.5 41.5 V57.5 H11 Z" fill="url(#gpg)" stroke="#d0d0d0" stroke-width="1"/>
<path d="M23.5 36.5 V41.5 H28.5" fill="#f4f4f4" stroke="#d0d0d0" stroke-width="1"/>
<circle cx="13.8" cy="41" r="6" fill="#a9cfa3" stroke="#9cc396" stroke-width="1"/>
<path d="M13.8 37.2 V44.8 M10 41 H17.6" stroke="#fff" stroke-width="2.6"/>
<!-- 2 template -->
<rect x="43.5" y="36" width="24.5" height="22" rx="1" fill="#b9b9b9"/>
<rect x="44.5" y="36.8" width="22.5" height="4" fill="#dcdcdc"/>
<circle cx="47.3" cy="38.8" r="1.6" fill="#ef9c92"/><circle cx="52.3" cy="38.8" r="1.6" fill="#f3c98c"/><circle cx="57.3" cy="38.8" r="1.6" fill="#a4d79b"/>
<rect x="44.8" y="41.5" width="4.6" height="15.5" fill="#f3f3f8"/><rect x="44.8" y="42.5" width="4.6" height="2.4" fill="#a9c1ee"/>
<rect x="52" y="43" width="5.4" height="5" fill="#a7c4f3"/><rect x="59.5" y="43" width="5.2" height="5" fill="#b5e8c3"/>
<rect x="52" y="49.5" width="6" height="4" fill="#f5b8a0"/><rect x="59.5" y="49.5" width="5.2" height="5" fill="#f8d9ac"/>
<!-- 3 folder -->
<path d="M81 38.5 Q81 36.3 83 36.3 H89.5 L91.5 38.3 H103 Q104.8 38.3 104.8 40 V53.5 Q104.8 55 103 55 H82.5 Q81 55 81 53.5 Z" fill="url(#gfd)"/>
<path d="M80.5 41.5 H105 V53.8 Q105 55 103.5 55 H82 Q80.5 55 80.5 53.8 Z" fill="#c2d0de"/>
<path d="M89 42.8 Q97.2 43.5 97.3 50.6 H101 L95.2 59.3 L89.2 50.6 H93 Q93 45.8 89 42.8 Z" fill="#fcfcfc" stroke="#cfd4d9" stroke-width=".8"/>
<!-- 4 floppy -->
<path d="M118.5 35.8 H140.5 V57.8 H120.5 L118.5 55.8 Z" fill="#9d9d9d"/>
<rect x="122" y="35.5" width="15" height="11.8" fill="#f0f0f0"/><rect x="122" y="35.5" width="15" height="2" fill="#a9bed2"/>
<path d="M123.5 40.5 H135.5 M123.5 43.3 H135.5" stroke="#d4d4d4" stroke-width="1"/>
<rect x="122.5" y="50" width="13.5" height="7.8" fill="#e8e8e8"/><rect x="124.5" y="51.2" width="3.4" height="6.6" fill="#9a9a9a"/>
<!-- 5 printer -->
<path d="M159.5 34.8 H173.5 V44 H159.5 Z" fill="#fafafa" stroke="#d6d6d6" stroke-width=".8"/>
<path d="M156.5 44 Q156.5 42 158 42 H175 Q176.5 42 176.5 44 L178.8 50 V55.5 Q178.8 57 177.5 57 H155 Q153.6 57 153.6 55.5 V50 Z" fill="#d9d9d9"/>
<rect x="157" y="43.6" width="19" height="4.4" fill="#a9a9a9"/>
<rect x="153.6" y="49" width="25.2" height="7.5" rx="1.5" fill="#e9e9e9"/>
<rect x="160" y="52.6" width="13.5" height="5.8" fill="#fbfbfb" stroke="#dadada" stroke-width=".6"/>
<rect x="161.3" y="53.4" width="10.8" height="3.6" fill="#a9c9ee"/><rect x="165" y="53.4" width="3" height="3.6" fill="#b9dccb"/>
<!-- separators -->
<g><rect x="188.7" y="31.40" width="1.4" height="1.4" fill="#5a5a5a"/><rect x="188.7" y="35.23" width="1.4" height="1.4" fill="#5a5a5a"/><rect x="188.7" y="39.06" width="1.4" height="1.4" fill="#5a5a5a"/><rect x="188.7" y="42.89" width="1.4" height="1.4" fill="#5a5a5a"/><rect x="188.7" y="46.72" width="1.4" height="1.4" fill="#5a5a5a"/><rect x="188.7" y="50.55" width="1.4" height="1.4" fill="#5a5a5a"/><rect x="188.7" y="54.38" width="1.4" height="1.4" fill="#5a5a5a"/><rect x="188.7" y="58.21" width="1.4" height="1.4" fill="#5a5a5a"/><rect x="188.7" y="62.04" width="1.4" height="1.4" fill="#5a5a5a"/><rect x="343.3" y="31.40" width="1.4" height="1.4" fill="#5a5a5a"/><rect x="343.3" y="35.23" width="1.4" height="1.4" fill="#5a5a5a"/><rect x="343.3" y="39.06" width="1.4" height="1.4" fill="#5a5a5a"/><rect x="343.3" y="42.89" width="1.4" height="1.4" fill="#5a5a5a"/><rect x="343.3" y="46.72" width="1.4" height="1.4" fill="#5a5a5a"/><rect x="343.3" y="50.55" width="1.4" height="1.4" fill="#5a5a5a"/><rect x="343.3" y="54.38" width="1.4" height="1.4" fill="#5a5a5a"/><rect x="343.3" y="58.21" width="1.4" height="1.4" fill="#5a5a5a"/><rect x="343.3" y="62.04" width="1.4" height="1.4" fill="#5a5a5a"/><rect x="447.5" y="31.40" width="1.4" height="1.4" fill="#5a5a5a"/><rect x="447.5" y="35.23" width="1.4" height="1.4" fill="#5a5a5a"/><rect x="447.5" y="39.06" width="1.4" height="1.4" fill="#5a5a5a"/><rect x="447.5" y="42.89" width="1.4" height="1.4" fill="#5a5a5a"/><rect x="447.5" y="46.72" width="1.4" height="1.4" fill="#5a5a5a"/><rect x="447.5" y="50.55" width="1.4" height="1.4" fill="#5a5a5a"/><rect x="447.5" y="54.38" width="1.4" height="1.4" fill="#5a5a5a"/><rect x="447.5" y="58.21" width="1.4" height="1.4" fill="#5a5a5a"/><rect x="447.5" y="62.04" width="1.4" height="1.4" fill="#5a5a5a"/><rect x="598.7" y="31.40" width="1.4" height="1.4" fill="#5a5a5a"/><rect x="598.7" y="35.23" width="1.4" height="1.4" fill="#5a5a5a"/><rect x="598.7" y="39.06" width="1.4" height="1.4" fill="#5a5a5a"/><rect x="598.7" y="42.89" width="1.4" height="1.4" fill="#5a5a5a"/><rect x="598.7" y="46.72" width="1.4" height="1.4" fill="#5a5a5a"/><rect x="598.7" y="50.55" width="1.4" height="1.4" fill="#5a5a5a"/><rect x="598.7" y="54.38" width="1.4" height="1.4" fill="#5a5a5a"/><rect x="598.7" y="58.21" width="1.4" height="1.4" fill="#5a5a5a"/><rect x="598.7" y="62.04" width="1.4" height="1.4" fill="#5a5a5a"/><rect x="791.8" y="31.40" width="1.4" height="1.4" fill="#5a5a5a"/><rect x="791.8" y="35.23" width="1.4" height="1.4" fill="#5a5a5a"/><rect x="791.8" y="39.06" width="1.4" height="1.4" fill="#5a5a5a"/><rect x="791.8" y="42.89" width="1.4" height="1.4" fill="#5a5a5a"/><rect x="791.8" y="46.72" width="1.4" height="1.4" fill="#5a5a5a"/><rect x="791.8" y="50.55" width="1.4" height="1.4" fill="#5a5a5a"/><rect x="791.8" y="54.38" width="1.4" height="1.4" fill="#5a5a5a"/><rect x="791.8" y="58.21" width="1.4" height="1.4" fill="#5a5a5a"/><rect x="791.8" y="62.04" width="1.4" height="1.4" fill="#5a5a5a"/></g>
<!-- 6 scissors -->
<path d="M199.8 34.8 L212.3 48 L209 50.2 L198.8 36.2 Z" fill="#f3f3f3" stroke="#cdcdcd" stroke-width=".8"/>
<path d="M221.2 34.8 L208.7 48 L212 50.2 L222.2 36.2 Z" fill="#f3f3f3" stroke="#cdcdcd" stroke-width=".8"/>
<circle cx="210.5" cy="46.3" r="2.1" fill="#e4e4e4" stroke="#bdbdbd" stroke-width=".8"/>
<path d="M209 49 Q201 47.5 199.5 53.5 Q199 57.5 203 57.5 Q207 56.5 209.8 50" fill="none" stroke="#d8a596" stroke-width="1.8"/>
<path d="M212 49 Q220 47.5 221.5 53.5 Q222 57.5 218 57.5 Q214 56.5 211.2 50" fill="none" stroke="#d8a596" stroke-width="1.8"/>
<!-- 7 copy -->
<path d="M236.5 35.5 H246.5 L250 39 V50.5 H236.5 Z" fill="#f5f5f5" stroke="#cdcdcd" stroke-width="1"/>
<path d="M244 44.5 H254 L258 48.5 V58.5 H244 Z" fill="#f7f7f7" stroke="#cdcdcd" stroke-width="1"/>
<path d="M238.5 40 H246 M238.5 43 H243 M238.5 46 H243 M246 50 H255 M246 53 H255 M246 56 H255" stroke="#dcdcdc" stroke-width=".9"/>
<!-- 8 paste -->
<rect x="272.8" y="37" width="18.4" height="20" rx="1.2" fill="#ead6b6" stroke="#dcc6a3" stroke-width=".8"/>
<path d="M277 38.8 Q277 35 282 34.8 Q287 35 287 38.8 L288.5 40.2 H275.5 Z" fill="#dedede" stroke="#c5c5c5" stroke-width=".7"/>
<path d="M281.5 44.5 H291 L294.8 48.3 V58.8 H281.5 Z" fill="#f7f7f7" stroke="#cdcdcd" stroke-width="1"/>
<path d="M283.5 50 H292 M283.5 53 H292 M283.5 56 H292" stroke="#dcdcdc" stroke-width=".9"/>
<!-- 9 brush -->
<ellipse cx="318.5" cy="57" rx="9" ry="1.5" fill="#d2d3f3" opacity=".75"/>
<g transform="translate(320.5 47.5) scale(.84) translate(-320.5 -47.5) rotate(47 321 46)">
<rect x="318.2" y="28.5" width="6" height="10" rx="2.8" fill="#f1f1f1" stroke="#cfcfcf" stroke-width=".7"/>
<path d="M312.8 38.5 Q321 35.5 329.3 38.5 L330 43.3 H312 Z" fill="#f3f3f3" stroke="#cdcdcd" stroke-width=".7"/>
<path d="M312 43.3 H330 L331.5 51 H310.5 Z" fill="#d9c3a0"/>
<path d="M313.5 43.3 L312.5 51 M316.5 43.3 L316 51 M319.5 43.3 V51 M322.5 43.3 V51 M325.5 43.3 L326 51 M328.5 43.3 L329.5 51" stroke="#c9b089" stroke-width=".6"/>
<path d="M310.5 51 H331.5 L330.5 56.5 Q321 59.5 311.5 56.5 Z" fill="#b4b8ef"/>
</g>
<!-- 10 undo -->
<path d="M352 39.3 L357.3 44.2 Q361 37.8 368 38 Q378 39 378.2 47.5 Q377.5 53.5 371.5 55.8 L369.6 54.4 Q373 51 372.6 47.5 Q371.5 43 367 43.3 Q363.5 43.8 361.8 48.7 L367.3 54.4 L353 54.6 Z" fill="url(#gun)" stroke="#e3cba2" stroke-width="1" stroke-linejoin="round"/>
<!-- 11 redo -->
<path d="M 425.7 39.3 L 420.4 44.2 Q 416.7 37.8 409.7 38.0 Q 399.7 39.0 399.5 47.5 Q 400.2 53.5 406.2 55.8 L 408.1 54.4 Q 404.7 51.0 405.1 47.5 Q 406.2 43.0 410.7 43.3 Q 414.2 43.8 415.9 48.7 L 410.4 54.4 L 424.7 54.6 Z" fill="url(#gre)" stroke="#afcbdd" stroke-width="1" stroke-linejoin="round"/>
<!-- dropdown arrows -->
<g fill="#8e8e8e">
<path d="M384.2 44.8 H390.4 L387.3 49 Z"/><path d="M432.4 44.8 H438.6 L435.5 49 Z"/>
<path d="M488 44.8 H494.2 L491.1 49 Z"/><path d="M536 44.8 H542.2 L539.1 49 Z"/><path d="M584.2 44.8 H590.4 L587.3 49 Z"/>
</g>
<!-- 12 sigma -->
<path d="M462.2 36.8 H476.8 V40.5 H475.3 L474.8 39 H467.3 L472.5 46.3 L466.8 54.3 H475 L475.8 52.5 H477 V57 H462.2 V55.8 L469 46.8 L462.2 38 Z" fill="#a4b9ec" stroke="#94abe2" stroke-width=".6"/>
<!-- 13 AZ -->
<text x="503.5" y="45.3" font-family="Liberation Serif" font-weight="bold" font-size="15" fill="#efc695">A</text>
<text x="504.5" y="57.5" font-family="Liberation Serif" font-weight="bold" font-style="italic" font-size="15" fill="#a9bdec">Z</text>
<path d="M520.3 43.3 H526.3 V50 H529.5 L523.3 57.2 L517.2 50 H520.3 Z" fill="#f7f7f7" stroke="#d0d0d0" stroke-width=".9"/>
<!-- 14 funnel -->
<path d="M552.6 36.8 Q565 33.8 577.6 36.8 L567.2 48.5 V56 Q565.2 57.8 563.2 56 V48.5 Z" fill="url(#gfu)" stroke="#cbcbcb" stroke-width=".6"/>
<ellipse cx="565.1" cy="36.6" rx="12.4" ry="1.6" fill="#d2d2d2" stroke="#bdbdbd" stroke-width=".5"/>
<rect x="570" y="48.5" width="8" height="2.1" fill="#a6baec"/><rect x="570" y="52.5" width="8" height="2.1" fill="#a6baec"/>
<!-- 15 fx -->
<path d="M619.5 35.8 H633 V57.6 H619.5 Q608.5 57 608.5 46.7 Q608.5 36.5 619.5 35.8 Z" fill="#d6e5cd" stroke="#c4d4bb" stroke-width="1"/>
<text x="614" y="52" font-family="Liberation Serif" font-style="italic" font-size="17" fill="#b0bba9">fx</text>
<!-- 16 toolbox -->
<rect x="648" y="36.3" width="19.6" height="21.2" fill="#f7f7f7" stroke="#cacaca" stroke-width="1"/>
<rect x="648.5" y="36.8" width="18.6" height="3" fill="#e2e2e2"/><circle cx="651.3" cy="38.3" r="1.5" fill="#f2a59c"/>
<rect x="649" y="40.5" width="5.6" height="5.6" fill="#b4d2ee"/>
<path d="M648.5 46.8 H667 M648.5 50.3 H667 M648.5 53.8 H667 M655 40.5 V46.5 M661 40.5 V46.5" stroke="#d9d9d9" stroke-width=".8"/>
<!-- 17 media -->
<rect x="682" y="42.5" width="12.4" height="11.6" fill="#bfd0ea" stroke="#aebfdc" stroke-width=".8"/>
<rect x="688.5" y="36" width="14.5" height="10.5" fill="#9f9f9f"/><rect x="691" y="37" width="9.4" height="8.4" fill="#b7d9ea"/>
<path d="M689.7 37.5 V45.5 M701.8 37.5 V45.5" stroke="#dedede" stroke-width="1.1" stroke-dasharray="1.4 1.2"/>
<path d="M698 55.5 V45.8 L707 43.6 V54" fill="none" stroke="#a0b3d6" stroke-width="1.9"/><path d="M698 46 L707 43.8 V46.5 L698 48.7 Z" fill="#a0b3d6"/>
<ellipse cx="696" cy="56" rx="3" ry="2.2" fill="#a0b3d6"/><ellipse cx="705" cy="54.5" rx="3" ry="2.2" fill="#a0b3d6"/>
<!-- 18 zoom -->
<rect x="765" y="36" width="17.5" height="23" fill="#e6e6e6" stroke="#cfcfcf" stroke-width="1"/>
<rect x="720.5" y="36" width="44.5" height="23" fill="#fff" stroke="#c2c2c2" stroke-width="1.3"/>
<path d="M770.2 46 H777.4 L773.8 50 Z" fill="#c4c4c4"/>
<text x="723" y="53" font-family="Liberation Sans" font-size="14.6" fill="#888" stroke="#888" stroke-width=".4">125%</text>
<!-- help -->
<circle cx="813" cy="46.8" r="11.4" fill="#f9f9f9" stroke="#dedede" stroke-width="1"/>
<circle cx="813" cy="46.8" r="8.6" fill="#c7b0e5"/>
<text x="808.6" y="52.2" font-family="Liberation Sans" font-weight="bold" font-size="15" fill="#fff">?</text>
<!-- search -->
<rect x="858.5" y="34.5" width="333.5" height="25.5" rx="12.7" fill="#ececec" stroke="#d2d2d2" stroke-width="1.6"/>
<path d="M912 35.3 H1179.3 Q1191.2 35.3 1191.2 47.2 Q1191.2 59.2 1179.3 59.2 H912 Q899.5 59.2 899.5 47.2 Q899.5 35.3 912 35.3 Z" fill="#f9f9f9" stroke="#d6d6d6" stroke-width="1.4"/>
<circle cx="871.5" cy="45.5" r="4.3" fill="none" stroke="#6e6e6e" stroke-width="2"/><path d="M874.5 49 L878.8 54" stroke="#6e6e6e" stroke-width="2.4" stroke-linecap="round"/>
<path d="M881.5 46 H889.5 L885.5 50 Z" fill="#6e6e6e"/>
<text x="909.5" y="53.4" font-family="Liberation Sans" font-size="15.6" fill="#c9c9c9">Search in Sheet</text>
</svg>
<!-- title doc icon -->
<svg style="position:absolute;left:471px;top:4px" width="18" height="22" viewBox="0 0 18 22">
<path d="M1 1.5 H12 L16 5.5 V20.5 H1 Z" fill="#fbfbfb" stroke="#e0e0e0" stroke-width="1"/>
<rect x="1" y="1" width="9.5" height="3.2" fill="#9fd39c"/>
<path d="M4.5 8 V19 M8 8 V19 M11.5 8 V19 M2 8 H15" stroke="#e9e9e9" stroke-width="1"/>
</svg>

</div>
<div id="ribbon">
  <div class="rt" style="left:0;width:115px"><span style="padding-left:42px">Home</span></div>
  <div class="rt" style="left:116px;width:87px">Layout</div>
  <div class="rt" style="left:204px;width:85px">Tables</div>
  <div class="rt" style="left:290px;width:86px">Charts</div>
  <div class="rt" style="left:377px;width:105px">SmartArt</div>
  <div class="rt" style="left:483px;width:104px">Formulas</div>
  <div class="rt" style="left:588px;width:71px">Data</div>
  <div class="rt" style="left:660px;width:89px">Review</div>
  <div style="left:1128px;top:4px;width:1px;height:18px;background:#9aa89a"></div>
  <svg style="position:absolute;left:1138px;top:6px" width="16" height="12"><path d="M1.6 2.2 L7.5 8.2 L13.4 2.2" fill="none" stroke="#808080" stroke-width="2.4"/></svg>
  <svg style="position:absolute;left:1166px;top:3px" width="30" height="20" viewBox="0 0 30 20">
    <g transform="translate(9 10)" fill="#878787"><circle r="5.2"/>
    <g id="tooth"><rect x="-1.5" y="-8" width="3" height="4" rx=".6"/></g>
    <use href="#tooth" transform="rotate(45)"/><use href="#tooth" transform="rotate(90)"/><use href="#tooth" transform="rotate(135)"/><use href="#tooth" transform="rotate(180)"/><use href="#tooth" transform="rotate(225)"/><use href="#tooth" transform="rotate(270)"/><use href="#tooth" transform="rotate(315)"/>
    <circle r="2.5" fill="#d4e0d2"/></g>
    <path d="M20.5 7.5 H27.5 L24 11.5 Z" fill="#8a8a8a"/>
  </svg>
  <svg style="position:absolute;left:32px;top:6px" width="14" height="12" viewBox="0 0 14 12"><path d="M7 0.5 L13.2 6.2 L11.5 6.2 L11.5 11.5 L8.5 11.5 L8.5 7.8 L5.5 7.8 L5.5 11.5 L2.5 11.5 L2.5 6.2 L0.8 6.2 Z" fill="#555"/></svg>
</div>
<div id="fbar">
  <div style="left:0;top:0;width:146px;height:22px;border-right:1px solid #c4c4c4"></div>
  <div style="left:61px;top:2px;font-size:14px;line-height:18px;color:#333;letter-spacing:0.6px">A11</div>
  <div style="left:147px;top:0;width:22px;height:22px;background:#f2f2f2;border-right:1px solid #c4c4c4"></div>
  <div style="left:170px;top:0;width:124px;height:22px;background:#ececec;border-right:1px solid #d0d0d0"></div>
  <svg style="position:absolute;left:152px;top:4px" width="10" height="15"><path d="M5 1 L8 5.5 L2 5.5 Z M5 14 L8 9.5 L2 9.5 Z" fill="#222"/></svg>
  <svg style="position:absolute;left:183px;top:3px" width="16" height="16"><circle cx="8" cy="8" r="7.5" fill="#8b8b8b"/><path d="M5 5 L11 11 M11 5 L5 11" stroke="#fff" stroke-width="2.2" stroke-linecap="round"/></svg>
  <svg style="position:absolute;left:211px;top:3px" width="16" height="16"><circle cx="8" cy="8" r="7.5" fill="#8b8b8b"/><path d="M4.3 8.5 L7 11 L11.7 5.2" stroke="#fff" stroke-width="2.2" fill="none" stroke-linecap="round" stroke-linejoin="round"/></svg>
  <svg style="position:absolute;left:238px;top:0" width="30" height="22"><path d="M9 1.5 Q3.5 5 3.5 11 Q3.5 17 9 20.5" fill="none" stroke="#9a9a9a" stroke-width="1.3"/><ellipse cx="15" cy="10.5" rx="6" ry="5" fill="#c4c4c4"/><ellipse cx="15" cy="9.5" rx="4" ry="3" fill="#d6d6d6"/></svg>
  <div style="left:272px;top:-1px;font-family:'Liberation Serif',serif;font-style:italic;font-weight:bold;font-size:16.5px;line-height:22px;color:#333">fx</div>
  <div style="left:1180px;top:0;width:1px;height:22px;background:#9a9a9a"></div>
  <svg style="position:absolute;left:1185.5px;top:9px" width="10" height="7"><path d="M0.5 0.5 L9.5 0.5 L5 6 Z" fill="#222"/></svg>
</div>
<div id="fsep"></div>

<!-- bottom -->
<div id="bottom">
<svg style="position:absolute;left:0;top:0" width="1200" height="45" viewBox="0 920 1200 45">
<defs><linearGradient id="gst" x1="0" y1="0" x2="0" y2="1"><stop offset="0" stop-color="#e4e4e4"/><stop offset=".2" stop-color="#efefef"/><stop offset=".5" stop-color="#ececec"/><stop offset=".55" stop-color="#e3e3e3"/><stop offset="1" stop-color="#e6e6e6"/></linearGradient><linearGradient id="gnav" x1="0" y1="0" x2="0" y2="1"><stop offset="0" stop-color="#fdfdfd"/><stop offset="1" stop-color="#e2e2e2"/></linearGradient><linearGradient id="gtabw" x1="0" y1="0" x2="0" y2="1"><stop offset="0" stop-color="#ffffff"/><stop offset="1" stop-color="#ececec"/></linearGradient><linearGradient id="glock" x1="0" y1="0" x2="0" y2="1"><stop offset="0" stop-color="#f0a84c"/><stop offset="1" stop-color="#d97a17"/></linearGradient><g id="lock"><path d="M3 8 V4.8 Q3 1.2 6.4 1.2 Q9.8 1.2 9.8 4.8 V8" fill="none" stroke="#8f8f8f" stroke-width="2.6"/><path d="M3 8 V4.8 Q3 1.2 6.4 1.2 Q9.8 1.2 9.8 4.8 V8" fill="none" stroke="#dadada" stroke-width="1.3"/><rect x="0.6" y="7.2" width="11.8" height="7.8" rx="1.2" fill="url(#glock)" stroke="#b96a16" stroke-width=".7"/><path d="M1.5 9.8 H11.5 M1.5 12.2 H11.5" stroke="#f7c583" stroke-width=".7" opacity=".8"/></g></defs>
<rect x="0" y="920" width="1200" height="45" fill="#e8e8e8"/>
<rect x="83" y="941" width="1117" height="24" fill="url(#gst)"/>
<rect x="83" y="920" width="1117" height="21" fill="#e9edf0"/>
<rect x="168" y="940" width="1032" height="2.2" fill="#8d97a3"/>
<rect x="83" y="920" width="1117" height="1.2" fill="#8e8e8e"/>
<rect x="83" y="921" width="85" height="20" fill="url(#gnav)"/>
<rect x="83" y="940.6" width="85" height="1.4" fill="#a5a5a5"/>
<g fill="#3c3c3c"><rect x="93" y="925" width="1.6" height="9.5"/><path d="M104 925 V934.5 L96 929.75 Z"/><path d="M119.5 925.3 V934.2 L111.2 929.75 Z"/><path d="M131.2 925.3 V934.2 L139.5 929.75 Z"/><path d="M147 925 V934.5 L155 929.75 Z"/><rect x="156.4" y="925" width="1.6" height="9.5"/></g>
<rect x="0" y="920" width="82" height="45" fill="#e9e9e9"/><rect x="0" y="920" width="82" height="1.2" fill="#9a9a9a"/>
<rect x="82" y="920" width="1.2" height="45" fill="#8f8f8f"/>
<rect x="4" y="926.5" width="74" height="29.5" rx="4" fill="#e2e2e2" stroke="#b4b4b4" stroke-width="1"/>
<path d="M8 926.5 H41.5 V956 H8 Q4 956 4 952 V930.5 Q4 926.5 8 926.5 Z" fill="#b7b7b7"/>
<rect x="14.3" y="934.3" width="18" height="14" rx="2" fill="#bcc3cc" stroke="#a3cdf7" stroke-width="1.1"/>
<rect x="16.6" y="936.6" width="2.3" height="2.2" fill="#86b8f0"/>
<rect x="16.6" y="940.4" width="2.3" height="2.2" fill="#86b8f0"/>
<rect x="16.6" y="944.2" width="2.3" height="2.2" fill="#86b8f0"/>
<rect x="20.5" y="936.6" width="2.3" height="2.2" fill="#86b8f0"/>
<rect x="20.5" y="940.4" width="2.3" height="2.2" fill="#86b8f0"/>
<rect x="20.5" y="944.2" width="2.3" height="2.2" fill="#86b8f0"/>
<rect x="24.4" y="936.6" width="2.3" height="2.2" fill="#86b8f0"/>
<rect x="24.4" y="940.4" width="2.3" height="2.2" fill="#86b8f0"/>
<rect x="24.4" y="944.2" width="2.3" height="2.2" fill="#86b8f0"/>
<rect x="28.3" y="936.6" width="2.3" height="2.2" fill="#86b8f0"/>
<rect x="28.3" y="940.4" width="2.3" height="2.2" fill="#86b8f0"/>
<rect x="28.3" y="944.2" width="2.3" height="2.2" fill="#86b8f0"/>
<rect x="47.5" y="934.5" width="10.5" height="14" rx="1" fill="#efefef" stroke="#8a8a8a" stroke-width="1"/>
<rect x="49.5" y="937.2" width="2.6" height="2.2" fill="#8a8a8a"/><rect x="53.3" y="937.2" width="2.6" height="2.2" fill="#8a8a8a"/>
<rect x="49.5" y="941" width="2.6" height="2.2" fill="#8a8a8a"/><rect x="53.3" y="941" width="2.6" height="2.2" fill="#8a8a8a"/>
<rect x="49.5" y="944.6" width="2.6" height="2.2" fill="#8a8a8a"/><rect x="53.3" y="944.6" width="2.6" height="2.2" fill="#8a8a8a"/>
<rect x="62" y="934.5" width="10.5" height="14" rx="1" fill="#efefef" stroke="#8a8a8a" stroke-width="1"/>
<rect x="64" y="937.2" width="2.6" height="2.2" fill="#8a8a8a"/><rect x="67.8" y="937.2" width="2.6" height="2.2" fill="#8a8a8a"/>
<rect x="64" y="941" width="2.6" height="2.2" fill="#8a8a8a"/><rect x="67.8" y="941" width="2.6" height="2.2" fill="#8a8a8a"/>
<rect x="64" y="944.6" width="2.6" height="2.2" fill="#8a8a8a"/><rect x="67.8" y="944.6" width="2.6" height="2.2" fill="#8a8a8a"/>
<rect x="201.5" y="942.5" width="1.2" height="22.5" fill="#b0b0b0"/><rect x="202.7" y="942.5" width="1.3" height="22.5" fill="#fbfbfb"/>
<rect x="83.2" y="942" width="118.3" height="23" fill="#efefef" opacity=".6"/>
<path d="M1024.5 921 H1184.5 Q1183.5 932 1179.5 937 Q1177.5 940.5 1174.5 940.5 H1024.5 Z" fill="url(#gtabw)" stroke="rgba(90,100,110,.55)" stroke-width=".8"/>
<path d="M834 921 H1036.5 Q1035.5 932 1031.5 937 Q1029.5 940.5 1026.5 940.5 H834 Z" fill="url(#gtabw)" stroke="rgba(90,100,110,.55)" stroke-width=".8"/>
<path d="M665.5 921 H846 Q845 932 841 937 Q839 940.5 836 940.5 H665.5 Z" fill="#f4693d" stroke="rgba(90,100,110,.55)" stroke-width=".8"/>
<path d="M516.5 921 H677.5 Q676.5 932 672.5 937 Q670.5 940.5 667.5 940.5 H516.5 Z" fill="#fdfd9f" stroke="rgba(90,100,110,.55)" stroke-width=".8"/>
<path d="M335.5 921 H528.5 Q527.5 932 523.5 937 Q521.5 940.5 518.5 940.5 H335.5 Z" fill="#f6ad43" stroke="rgba(90,100,110,.55)" stroke-width=".8"/>
<path d="M168 921 H347.5 Q346.5 932 342.5 937 Q340.5 940.5 337.5 940.5 H168 Z" fill="#22e6ee" stroke="rgba(90,100,110,.55)" stroke-width=".8"/>
<path d="M167 921 H177 Q176.2 932 172 937.5 Q170 940.5 167 940.5 Z" fill="#3bb866" stroke="rgba(60,90,70,.5)" stroke-width=".6"/>
<text x="188.5" y="933.6" font-family="Liberation Sans" font-size="14" font-weight="normal" fill="#111" stroke="#111" stroke-width=".35" textLength="132" lengthAdjust="spacingAndGlyphs">1. Water Report Input</text>
<use href="#lock" x="322" y="921.5"/>
<text x="361" y="933.6" font-family="Liberation Sans" font-size="14" font-weight="normal" fill="#111" stroke="#111" stroke-width=".35" textLength="139" lengthAdjust="spacingAndGlyphs">2. Sparge Acidification</text>
<use href="#lock" x="502" y="921.5"/>
<text x="539.3" y="933.6" font-family="Liberation Sans" font-size="13.8" font-weight="bold" fill="#000" textLength="114" lengthAdjust="spacingAndGlyphs">3. Grain Bill Input</text>
<use href="#lock" x="655" y="921.5"/>
<text x="691" y="933.6" font-family="Liberation Sans" font-size="14" font-weight="normal" fill="#fff" stroke="#fff" stroke-width=".35" textLength="126" lengthAdjust="spacingAndGlyphs">4. Water Adjustment</text>
<use href="#lock" x="820" y="921.5"/>
<text x="858.5" y="933.6" font-family="Liberation Sans" font-size="14" font-weight="normal" fill="#111" stroke="#111" stroke-width=".35" textLength="149" lengthAdjust="spacingAndGlyphs">5. Adjustment Summary</text>
<use href="#lock" x="1010" y="921.5"/>
<text x="1049" y="933.6" font-family="Liberation Sans" font-size="14" font-weight="normal" fill="#111" stroke="#111" stroke-width=".35" textLength="107" lengthAdjust="spacingAndGlyphs">Water Knowledge</text>
<use href="#lock" x="1157" y="921.5"/>
<path d="M1186 922 Q1188 932 1192 940.5 H1200 V921 Z" fill="#f0f0f0"/>
<path d="M1191.5 929.6 H1200 M1196.8 924.5 V934.8" stroke="#333" stroke-width="1.8"/>
<path d="M1186.5 963 L1199 950.5 M1190.5 963 L1199 954.5 M1194.5 963 L1199 958.5" stroke="#9a9a9a" stroke-width="1.1"/>
</svg>
</div>
</body></html>
